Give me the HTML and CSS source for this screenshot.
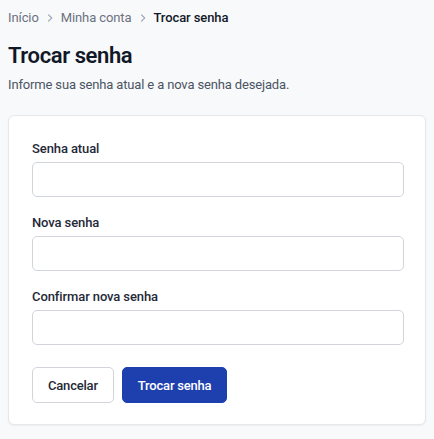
FILE: index.html
```html
<!DOCTYPE html>
<html lang="pt-BR">
<head>
<meta charset="utf-8">
<title>Trocar senha</title>
<link rel="stylesheet" href="styles.css">
</head>
<body>
<div class="page">
  <nav class="crumbs">
    <a class="crumb" href="#">Início</a>
    <svg class="sep" viewBox="0 0 6 10" width="6" height="10"><path d="M1.5 1.8l3.2 3.2-3.2 3.2" fill="none" stroke="currentColor" stroke-width="1.1" stroke-linecap="round" stroke-linejoin="round"/></svg>
    <a class="crumb" href="#">Minha conta</a>
    <svg class="sep" viewBox="0 0 6 10" width="6" height="10"><path d="M1.5 1.8l3.2 3.2-3.2 3.2" fill="none" stroke="currentColor" stroke-width="1.1" stroke-linecap="round" stroke-linejoin="round"/></svg>
    <span class="crumb current">Trocar senha</span>
  </nav>
  <h1 class="title">Trocar senha</h1>
  <p class="subtitle">Informe sua senha atual e a nova senha desejada.</p>
  <form class="card">
    <div class="field">
      <label class="label">Senha atual</label>
      <input class="input" type="password">
    </div>
    <div class="field">
      <label class="label">Nova senha</label>
      <input class="input" type="password">
    </div>
    <div class="field">
      <label class="label">Confirmar nova senha</label>
      <input class="input" type="password">
    </div>
    <div class="actions">
      <button type="button" class="btn btn-secondary">Cancelar</button>
      <button type="button" class="btn btn-primary">Trocar senha</button>
    </div>
  </form>
</div>
</body>
</html>
```
FILE: styles.css
```css
* { box-sizing: border-box; }
html, body { margin: 0; padding: 0; }
body {
  background: #f8f9fb;
  font-family: "Roboto", "Noto Sans", sans-serif;
  color: #111827;
}
.page { padding: 8px 8px; }
.crumbs {
  display: flex;
  align-items: center;
  gap: 8px;
  font-size: 13px;
  line-height: 20px;
  letter-spacing: -0.1px;
}
.crumb { color: #6b7280; text-decoration: none; }
.crumb.current { color: #111827; font-weight: 500; }
.sep { color: #9ca3af; }
.title {
  margin: 14px 0 0;
  font-size: 22px;
  line-height: 28px;
  font-weight: 600;
  letter-spacing: -0.4px;
}
.subtitle {
  margin: 5px 0 0;
  font-size: 13px;
  line-height: 20px;
  color: #4b5563;
  letter-spacing: -0.15px;
}
.card {
  margin-top: 20px;
  background: #fff;
  border: 1px solid #e5e7eb;
  border-radius: 6px;
  box-shadow: 0 1px 2px rgba(16,24,40,0.05);
  padding: 23px 21px 21px 23px;
  display: flex;
  flex-direction: column;
  gap: 16px;
}
.field { display: flex; flex-direction: column; gap: 3px; }
.label {
  font-size: 13px;
  line-height: 20px;
  font-weight: 500;
  color: #1f2937;
  letter-spacing: -0.1px;
}
.input {
  height: 35px;
  border: 1px solid #d1d5db;
  border-radius: 5px;
  background: #fff;
  font: inherit;
}
.actions { display: flex; gap: 8px; margin-top: 6px; }
.btn {
  height: 36px;
  padding: 0 15px;
  border-radius: 5px;
  font-family: inherit;
  font-size: 13px;
  font-weight: 500;
  letter-spacing: -0.2px;
  cursor: pointer;
}
.btn-secondary { background: #fff; border: 1px solid #d1d5db; color: #1f2937; }
.btn-primary { background: #1e40af; border: 1px solid #1e40af; color: #fff; }
```
